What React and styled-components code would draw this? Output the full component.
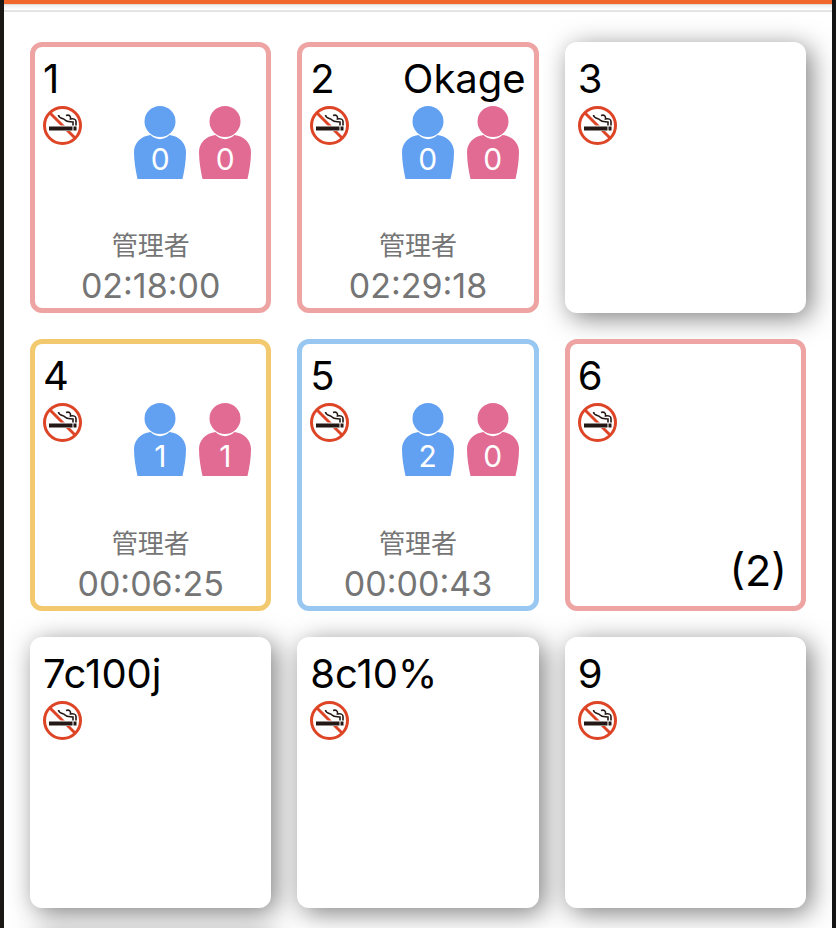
import React from "react";
import styled, { createGlobalStyle } from "styled-components";

const GlobalStyle = createGlobalStyle`
  * {
    box-sizing: border-box;
  }

  body {
    margin: 0;
    background-color: #fff;
    font-family: Inter, "Noto Sans CJK JP", sans-serif;
  }
`;

const Screen = styled.div`
  height: 100vh;
  overflow: hidden;
  border-left: 4px solid #1a1814;
  border-right: 4px solid #141414;
  background-color: #fff;
`;

const TopBar = styled.header`
  height: 12px;
  border-top: 4px solid #f1662a;
  border-bottom: 2px solid #e4e4e4;
  background: linear-gradient(#d9cfc8, #f0f0f0 25%, #fff) padding-box;
`;

const Grid = styled.main`
  display: grid;
  grid-template-columns: repeat(3, 1fr);
  gap: 26px;
  padding: 30px 26px;
`;

const Card = styled.button`
  display: flex;
  flex-direction: column;
  align-items: stretch;
  min-width: 0;
  aspect-ratio: 8 / 9;
  padding: 12px 8px 2px;
  border: 5px solid ${(props) => props.$color || "#fff"};
  border-radius: 12px;
  background-color: #fff;
  box-shadow: ${(props) =>
    props.$color ? "none" : "5px 5px 26px rgba(0, 0, 0, 0.5)"};
  color: #000;
  font-family: inherit;
  text-align: left;
  cursor: pointer;
`;

const CardHead = styled.span`
  display: flex;
  justify-content: space-between;
  font-size: 40px;
  line-height: 40px;
  white-space: nowrap;
`;

const CardBody = styled.span`
  display: flex;
  justify-content: space-between;
  align-items: flex-start;
  margin-top: 7px;
`;

const Guests = styled.span`
  display: flex;
  gap: 13px;
  margin-right: 7px;
`;

const Guest = styled.span`
  position: relative;
  width: 52px;
  height: 73px;
  color: ${(props) => props.$color};

  & svg {
    display: block;
  }
`;

const Count = styled.span`
  position: absolute;
  left: 0;
  right: 0;
  bottom: 4px;
  color: #fff;
  font-size: 30px;
  font-weight: 400;
  line-height: 32px;
  text-align: center;
`;

const CardFoot = styled.span`
  display: flex;
  flex-direction: column;
  margin-top: auto;
  color: #757575;
  line-height: 40px;
  text-align: center;
`;

const Staff = styled.span`
  font-size: 26px;
`;

const Time = styled.span`
  font-size: 34px;
`;

const Waiting = styled.span`
  margin: auto 6px 10px auto;
  font-size: 43px;
  line-height: 48px;
`;

const NoSmoking = () => (
  <svg width="39" height="39" viewBox="0 0 39 39" fill="none">
    <circle cx="19.5" cy="19.5" r="18" stroke="#dd4526" strokeWidth="3" />
    <path d="M7 7l25 25" stroke="#dd4526" strokeWidth="3" />
    <path d="M5 19.5h25v5.500H5z" fill="#fff" />
    <path d="M6 20.500h23.500v4H6zM30.500 20.500h3v4h-3z" fill="#231815" />
    <path
      d="M15.500 9c.5 4 4.500 3 6.500 5 2 2.500 5 1.500 8 2v3.500M23 9.500c3-1 5 0 4.500 3.500 3-.5 5.500 0 5.500 2.500v4"
      stroke="#fff"
      strokeWidth="3.500"
    />
    <path
      d="M15.500 9c.5 4 4.500 3 6.500 5 2 2.500 5 1.500 8 2v3.500M23 9.500c3-1 5 0 4.500 3.500 3-.5 5.500 0 5.500 2.500v4"
      stroke="#231815"
      strokeWidth="1.600"
    />
  </svg>
);

const Person = ({ color, count }) => (
  <Guest $color={color}>
    <svg width="52" height="73" viewBox="0 0 52 73" fill="currentColor">
      <circle cx="26" cy="15.500" r="15.500" />
      <path d="M16.500 29C7 30 0 37 0 46c0 9 1.500 18 3.500 27h45C50.500 64 52 55 52 46c0-9-7-16-16.500-17-5.500 5.500-13.500 5.500-19 0z" />
    </svg>
    <Count>{count}</Count>
  </Guest>
);

const colors = {
  red: "#eda4a3",
  yellow: "#f3c96f",
  blue: "#98c7f2",
};

const tables = [
  { name: "1", color: colors.red, men: 0, women: 0, staff: "管理者", time: "02:18:00" },
  { name: "2", note: "Okage", color: colors.red, men: 0, women: 0, staff: "管理者", time: "02:29:18" },
  { name: "3" },
  { name: "4", color: colors.yellow, men: 1, women: 1, staff: "管理者", time: "00:06:25" },
  { name: "5", color: colors.blue, men: 2, women: 0, staff: "管理者", time: "00:00:43" },
  { name: "6", color: colors.red, waiting: 2 },
  { name: "7c100j" },
  { name: "8c10%" },
  { name: "9" },
];

const TableCard = ({ table }) => (
  <Card type="button" $color={table.color}>
    <CardHead>
      <span>{table.name}</span>
      {table.note && <span>{table.note}</span>}
    </CardHead>
    <CardBody>
      <NoSmoking />
      {table.time && (
        <Guests>
          <Person color="#62a1f2" count={table.men} />
          <Person color="#e26b94" count={table.women} />
        </Guests>
      )}
    </CardBody>
    {table.time && (
      <CardFoot>
        <Staff>{table.staff}</Staff>
        <Time>{table.time}</Time>
      </CardFoot>
    )}
    {table.waiting && <Waiting>({table.waiting})</Waiting>}
  </Card>
);

const App = () => {
  return (
    <>
      <GlobalStyle />
      <Screen>
        <TopBar />
        <Grid>
          {tables.map((table) => (
            <TableCard key={table.name} table={table} />
          ))}
          <Card as="div" />
        </Grid>
      </Screen>
    </>
  );
};

export default App;
